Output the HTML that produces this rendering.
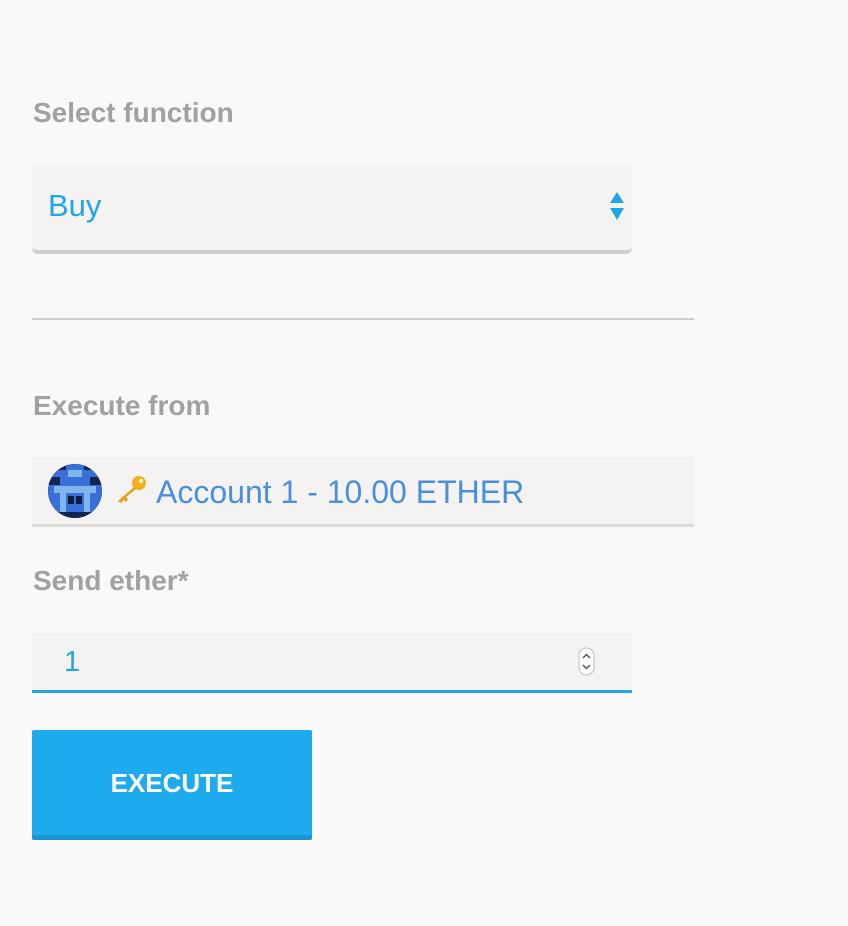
<!DOCTYPE html>
<html><head><style>
body{margin:0;background:#f9f9f9;width:848px;height:926px;position:relative;font-family:"Liberation Sans",sans-serif;overflow:hidden}
.lbl{position:absolute;left:33px;font-weight:bold;font-size:28px;color:#a3a09e}
.box{position:absolute;background:#f4f3f1}
</style></head><body>
<div class="lbl" style="top:97px">Select function</div>
<div class="box" style="left:32px;top:164px;width:600px;height:86px;border-radius:6px;border-bottom:4px solid #d0cdcb"></div>
<div style="position:absolute;left:48px;top:188px;font-size:31px;color:#1fa5e8">Buy</div>
<svg style="position:absolute;left:608px;top:192px" width="18" height="30"><polygon points="9,0 16,11 2,11" fill="#1fa5e8"/><polygon points="2,16 16,16 9,28" fill="#1fa5e8"/></svg>
<div style="position:absolute;left:32px;top:318px;width:662px;height:2px;background:#d0cecc"></div>
<div class="lbl" style="top:390px">Execute from</div>
<div class="box" style="left:32px;top:457px;width:662px;height:67px;border-bottom:3px solid #dddbd9"></div>
<svg style="position:absolute;left:48px;top:464px" width="54" height="54" viewBox="0 0 54 54">
<defs><clipPath id="c"><circle cx="27" cy="27" r="27"/></clipPath></defs>
<g clip-path="url(#c)">
<rect width="54" height="54" fill="#112650"/>
<rect x="0" y="6" width="54" height="42" fill="#3a6fd8"/>
<rect x="18" y="0" width="18" height="54" fill="#3a6fd8"/>
<rect x="20" y="6" width="14" height="7" fill="#7fb6ee"/>
<rect x="6" y="22" width="42" height="7" fill="#7fb6ee"/>
<rect x="12" y="29" width="6" height="20" fill="#7fb6ee"/>
<rect x="36" y="29" width="6" height="20" fill="#7fb6ee"/>
<rect x="0" y="13" width="12" height="8" fill="#112650"/>
<rect x="42" y="13" width="12" height="8" fill="#112650"/>
<rect x="20" y="32" width="6" height="8" fill="#0e1d3e"/>
<rect x="28" y="32" width="6" height="8" fill="#0e1d3e"/>
<rect x="0" y="48" width="54" height="6" fill="#112650"/>
</g></svg>
<svg style="position:absolute;left:114px;top:474px" width="34" height="30" viewBox="0 0 34 30"><circle cx="25" cy="9" r="7" fill="#f2b01e"/><circle cx="27" cy="7" r="2.2" fill="#fff3c0"/><path d="M20 13 L4 27 L7 29 L10 26 L12 28 L14 25 L12 23 L22 15Z" fill="#e3a21a"/></svg>
<div style="position:absolute;left:156px;top:474px;font-size:32px;color:#4a8fdc">Account 1 - 10.00 ETHER</div>
<div class="lbl" style="top:565px">Send ether*</div>
<div class="box" style="left:32px;top:633px;width:600px;height:57px;border-bottom:3px solid #1fa5e8"></div>
<div style="position:absolute;left:64px;top:646px;font-size:29px;color:#1fa5e8">1</div>
<svg style="position:absolute;left:578px;top:647px" width="18" height="30"><rect x="1" y="1" width="15" height="27" rx="7.5" fill="#fff" stroke="#bbb"/><path d="M5 11 L8.5 7.5 L12 11 M5 18 L8.5 21.5 L12 18" stroke="#555" stroke-width="1.5" fill="none"/></svg>
<div style="position:absolute;left:32px;top:730px;width:280px;height:105px;background:#1eabee;border-bottom:5px solid #1a94d2;border-radius:2px;color:#fff;font-size:26px;font-weight:bold;text-align:center;line-height:107px">EXECUTE</div>
</body></html>
